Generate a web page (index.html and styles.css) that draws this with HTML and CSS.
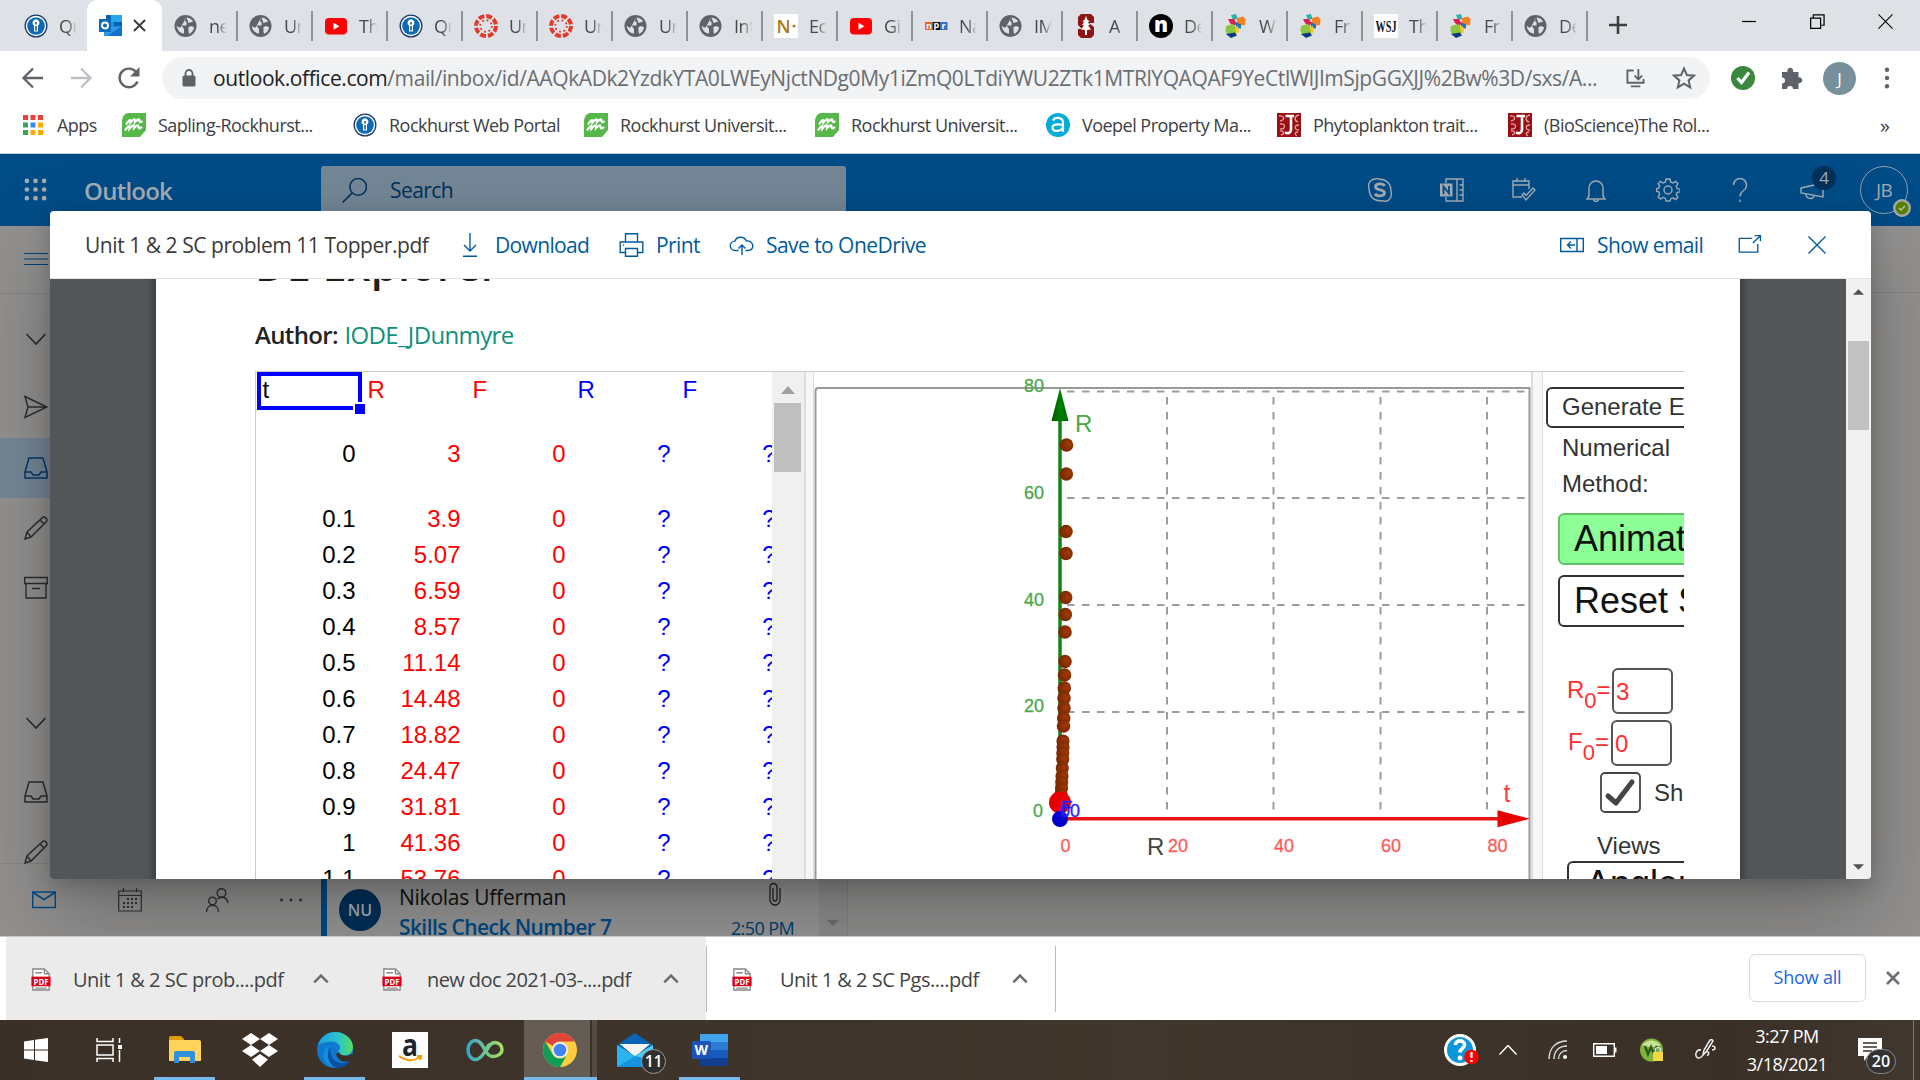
FILE: index.html
```html
<!DOCTYPE html>
<html lang="en">
<head>
<meta charset="utf-8">
<title>Outlook</title>
<link rel="stylesheet" href="styles.css">
</head>
<body>
<svg class="defs" aria-hidden="true">
  <symbol id="rock" viewBox="0 0 24 24"><circle cx="12" cy="12" r="11.500" fill="#1c3a6b"/><circle cx="12" cy="12" r="10.200" fill="#fff"/><circle cx="12" cy="12" r="8.800" fill="#0d6bb5"/><path d="M12 5.200a3.600 3.600 0 0 1 2 6.500V17.500h-4v-5.800a3.600 3.600 0 0 1 2-6.500z" fill="#fff"/><path d="M12 8v2.500M12 12v4.500" stroke="#1c3a6b" stroke-width="1.400"/></symbol>
  <symbol id="globe" viewBox="0 0 24 24"><circle cx="11.500" cy="12" r="11" fill="#5f6368"/><path d="M12.500 3.400 10 6.500 12.500 8v3.500H7.500l2.500 3.500v4.800c-4.300-.9-7-4-7.300-8L5 13.500h1.500M14.500 17.500v-4.500l3-1 2.600 1.500c-.6 3-2.300 5.200-5 6.500zM12.500 3.400c3 .3 5.400 1.800 6.600 4.100L14.500 9z" fill="#dee1e6"/></symbol>
  <symbol id="yt" viewBox="0 0 24 24"><rect x="1" y="4" width="22" height="16.500" rx="4" fill="#f00"/><path d="M9.500 8.800v7l6-3.500z" fill="#fff"/></symbol>
  <symbol id="canvas" viewBox="0 0 24 24"><circle cx="12" cy="12" r="10" fill="none" stroke="#e4392b" stroke-width="4" stroke-dasharray="5.850 2"/><circle cx="12" cy="12" r="5.800" fill="none" stroke="#e4392b" stroke-width="1.800" stroke-dasharray="1.800 2.750"/></symbol>
  <symbol id="ncol" viewBox="0 0 24 24"><rect width="24" height="24" fill="#fff"/><text x="2.500" y="18.500" font-family="Open Sans" font-size="18" fill="#a87b1d" font-weight="600">N</text><circle cx="20" cy="12" r="1.500" fill="#a87b1d"/></symbol>
  <symbol id="npr" viewBox="0 0 24 24"><rect x="1" y="8" width="7.500" height="8" fill="#e8602c"/><rect x="8.500" y="8" width="7.500" height="8" fill="#111"/><rect x="16" y="8" width="7.500" height="8" fill="#3a6fbf"/><g fill="#fff" font-family="Open Sans" font-weight="700" font-size="9"><text x="2" y="14.500">n</text><text x="9.500" y="14">p</text><text x="17.500" y="14.500">r</text></g></symbol>
  <symbol id="stan" viewBox="0 0 24 24"><path d="M7 0h10l3 3v6h-5l5 4v8l-3 3H7l-3-3v-6h4l-4-4V3z" fill="#8c1515"/><path d="m12 2 1.500 4 2 1-1.500 1.500 2 2.500-2 .5 3 4-4 .5v5h-2v-5l-4-.5 3-4-2-.5 2-2.500L8.500 7l2-1z" fill="#fff"/></symbol>
  <symbol id="nblk" viewBox="0 0 24 24"><circle cx="12" cy="12" r="12" fill="#000"/><text x="5" y="18" font-family="Open Sans" font-size="21" font-weight="800" fill="#fff">n</text></symbol>
  <symbol id="cubes" viewBox="0 0 24 24"><path d="m7 1 5-1 1.500 5L9 6z" fill="#29b1a5"/><path d="m13 4 6-1.500 2.500 2.500-.5 6-5 .5-3-3z" fill="#f58220"/><path d="m4 5 6 0 3 5-4 2-3-3z" fill="#d9224c"/><path d="m12 8 5 2.500v4L12 14z" fill="#1b75bb"/><path d="m2 12 7-2 3 3v6l-9 1.500-1.500-4z" fill="#8cc63f"/><path d="m2 20 9-1.500 2 3-6 2.500z" fill="#0b3a7a"/><path d="m11 13 3-1 1 6-3 2z" fill="#f9c623"/></symbol>
  <symbol id="wsj" viewBox="0 0 24 24"><rect width="24" height="24" fill="#fff"/><text x="1.500" y="17.500" textLength="21" lengthAdjust="spacingAndGlyphs" font-family="Liberation Serif" font-size="16" font-weight="700" fill="#111">WSJ</text></symbol>
  <symbol id="sapling" viewBox="0 0 24 24"><path d="M6 0h18v17l-6 7H0V7q1-6 6-7z" fill="#55b848"/><path d="M4 11.500Q9 4 8.500 9.500 13.500 3.500 13 9q5-5 4.500-.5Q18 10 20.500 8M3 17.500Q8 10 7.500 15.500 12.500 9.500 12 15q5-5 4.500-.5 .5 2 3.500-.5" fill="none" stroke="#fff" stroke-width="2.200"/></symbol>
  <symbol id="voepel" viewBox="0 0 24 24"><circle cx="12" cy="12" r="12" fill="#00acd8"/><path d="M7 7.500C8.500 3.500 17 4 17 9.500V19M17 12c-6-1.500-11-.5-10.500 3 .5 4.500 9 3.500 10.500-1" fill="none" stroke="#fff" stroke-width="2.200"/></symbol>
  <symbol id="jstor" viewBox="0 0 24 24"><rect width="24" height="24" fill="#990f14"/><path d="M2 3c6-1 6 4 1 5m0 3c6-1 6 5 0 5m0 2c4-1 5 3 1 4M22 2c-5 1-5 6-1 7m1 3c-5 0-5 5 0 5m-1 2c-3 0-4 2-1 4" stroke="#e2a0a0" stroke-width="1.300" fill="none"/><path d="M8.500 3H17M14 3v13c0 4-3 5-6 3.500" stroke="#fff" stroke-width="2.600" fill="none"/></symbol>
  <symbol id="pdf" viewBox="0 0 20 24"><path d="M1.500 1h12l5 5v17h-17z" fill="#fff" stroke="#888" stroke-width="1.400"/><path d="M13.500 1v5h5M4 5h7M4 21h12" fill="none" stroke="#888" stroke-width="1.400"/><rect x="0" y="9" width="20" height="10" fill="#d9001b"/><text x="2.200" y="17.300" textLength="15.600" lengthAdjust="spacingAndGlyphs" font-family="Open Sans" font-size="9" font-weight="700" fill="#fff">PDF</text></symbol>
  <symbol id="inbox" viewBox="0 0 24 24"><path d="m1 16 4-14h14l4 14v6H1zM1 16h6l2 3h6l2-3h6" fill="none" stroke="currentColor" stroke-width="1.500"/></symbol>
  <symbol id="pencil" viewBox="0 0 24 24"><path d="m1 23 2-7L18 2q2-2 4 0t0 4L7 21zM16 4l4 4M3 16l4 5" fill="none" stroke="currentColor" stroke-width="1.500"/></symbol>
  <symbol id="down" viewBox="0 0 24 24"><path d="m2.500 7 9.500 10 9.500-10" fill="none" stroke="currentColor" stroke-width="1.700"/></symbol>
  <symbol id="up" viewBox="0 0 16 16"><path d="m2 11 6-6 6 6" fill="none" stroke="#6b6e72" stroke-width="2.200"/></symbol>
</svg>

<div class="tabs">
  <div class="tab first"><svg><use href="#rock"/></svg><span>Qu</span></div>
  <div class="tab active"><svg viewBox="0 0 24 24"><path d="M7 1h16v14H7z" fill="#0a64ad"/><path d="M12 1h11v7H12z" fill="#28a8ea"/><path d="M7 8h8v7H7z" fill="#1490df"/><path d="M5 13l18-1v10H5z" fill="#2d9be6"/><path d="m8 22 15-10v10z" fill="#1272cc"/><rect y="5" width="12" height="13" fill="#0f6cbd"/><circle cx="6" cy="11.500" r="3" fill="none" stroke="#fff" stroke-width="1.900"/></svg><svg class="tclose" viewBox="0 0 14 14"><path d="m1 1 12 12M13 1 1 13" stroke="#3c4043" stroke-width="2.200"/></svg></div>
  <div class="tab"><svg><use href="#globe"/></svg><span>ne</span></div>
  <div class="tab"><svg><use href="#globe"/></svg><span>Un</span></div>
  <div class="tab"><svg><use href="#yt"/></svg><span>Th</span></div>
  <div class="tab"><svg><use href="#rock"/></svg><span>Qu</span></div>
  <div class="tab"><svg><use href="#canvas"/></svg><span>Un</span></div>
  <div class="tab"><svg><use href="#canvas"/></svg><span>Un</span></div>
  <div class="tab"><svg><use href="#globe"/></svg><span>Un</span></div>
  <div class="tab"><svg><use href="#globe"/></svg><span>Int</span></div>
  <div class="tab"><svg><use href="#ncol"/></svg><span>Ec</span></div>
  <div class="tab"><svg><use href="#yt"/></svg><span>Gi</span></div>
  <div class="tab"><svg><use href="#npr"/></svg><span>Na</span></div>
  <div class="tab"><svg><use href="#globe"/></svg><span>IM</span></div>
  <div class="tab"><svg><use href="#stan"/></svg><span>A</span></div>
  <div class="tab"><svg><use href="#nblk"/></svg><span>De</span></div>
  <div class="tab"><svg><use href="#cubes"/></svg><span>W</span></div>
  <div class="tab"><svg><use href="#cubes"/></svg><span>Fr</span></div>
  <div class="tab"><svg><use href="#wsj"/></svg><span>Th</span></div>
  <div class="tab"><svg><use href="#cubes"/></svg><span>Fr</span></div>
  <div class="tab"><svg><use href="#globe"/></svg><span>De</span></div>
  <svg class="newtab" viewBox="0 0 18 18"><path d="M9 0v18M0 9h18" stroke="#3c4043" stroke-width="2.600"/></svg>
  <div class="winctl">
    <svg viewBox="0 0 16 16"><path d="M0 8h15" stroke="#000" stroke-width="1.300"/></svg>
    <svg viewBox="0 0 16 16"><path d="M.7 4.500h10.600v10.800H.700zM3.500 4V1H15v11h-3.500" fill="none" stroke="#000" stroke-width="1.300"/></svg>
    <svg viewBox="0 0 16 16"><path d="m.5.500 15 15m0-15-15 15" stroke="#000" stroke-width="1.200"/></svg>
  </div>
</div>

<div class="toolbar">
  <svg class="nav" viewBox="0 0 24 24"><path d="M22 12H3M12 2.500 2.500 12l9.500 9.500" fill="none" stroke="#5f6368" stroke-width="2.300"/></svg>
  <svg class="nav" viewBox="0 0 24 24"><path d="M2 12h19M12 2.500l9.500 9.500-9.500 9.500" fill="none" stroke="#bdc1c6" stroke-width="2.300"/></svg>
  <svg class="nav" viewBox="0 0 24 24"><path d="M20.500 15.500a9.300 9.300 0 1 1-1-9" fill="none" stroke="#5f6368" stroke-width="2.400"/><path d="M22.500 1v9.500H13z" fill="#5f6368"/></svg>
  <div class="omni">
    <svg class="lock" viewBox="0 0 14 18"><rect x=".5" y="6.500" width="13" height="11" rx="1.500" fill="#5f6368"/><path d="M3.500 7V4.500a3.500 3.500 0 0 1 7 0V7" fill="none" stroke="#5f6368" stroke-width="1.800"/></svg>
    <span class="url"><b>outlook.office.com</b>/mail/inbox/id/AAQkADk2YzdkYTA0LWEyNjctNDg0My1iZmQ0LTdiYWU2ZTk1MTRlYQAQAF9YeCtlWlJImSjpGGXJJ%2Bw%3D/sxs/A...</span>
    <svg class="inst" viewBox="0 0 20 20"><path d="M8 1.500H1.500v13h17v-4M5 18.300h10M13 0v11M9 7l4 4 4-4" fill="none" stroke="#5f6368" stroke-width="2"/></svg>
    <svg class="star" viewBox="0 0 24 24"><path d="m12 2.500 2.900 6.600 7.100.6-5.400 4.700 1.600 7-6.200-3.700-6.200 3.700 1.600-7L2 9.700l7.100-.6z" fill="none" stroke="#5f6368" stroke-width="2"/></svg>
  </div>
  <svg class="shield" viewBox="0 0 24 24"><circle cx="12" cy="12" r="12" fill="#3a873d"/><path d="m6.500 12 4 4.500L18 6.500" fill="none" stroke="#fff" stroke-width="3.200"/></svg>
  <svg class="puzzle" viewBox="0 0 22 22"><path d="M1 5h5.500a3 3 0 1 1 5.500 0h5.500v5.500a2.900 2.900 0 1 1 0 5.500v6h-5.500a3 3 0 0 0-6 0H1v-5.500a3 3 0 0 0 0-6z" fill="#5f6368"/></svg>
  <div class="me">J</div>
  <svg class="kebab" viewBox="0 0 6 24"><g fill="#5f6368"><circle cx="3" cy="3" r="2.400"/><circle cx="3" cy="12" r="2.400"/><circle cx="3" cy="21" r="2.400"/></g></svg>
</div>

<div class="marks">
  <div class="apps"><svg viewBox="0 0 20 20"><path d="M0 0h5v5H0zM7.500 0h5v5h-5zM15 0h5v5h-5z" fill="#ea4335"/><path d="M0 7.500h5v5H0z" fill="#34a853"/><path d="M7.500 7.500h5v5h-5z" fill="#4285f4"/><path d="M15 7.500h5v5h-5zM7.500 15h5v5h-5zM15 15h5v5h-5z" fill="#f9ab00"/><path d="M0 15h5v5H0z" fill="#34a853"/></svg><span>Apps</span></div>
  <div class="mark"><svg><use href="#sapling"/></svg><span>Sapling-Rockhurst...</span></div>
  <div class="mark"><svg><use href="#rock"/></svg><span>Rockhurst Web Portal</span></div>
  <div class="mark"><svg><use href="#sapling"/></svg><span>Rockhurst Universit...</span></div>
  <div class="mark"><svg><use href="#sapling"/></svg><span>Rockhurst Universit...</span></div>
  <div class="mark"><svg><use href="#voepel"/></svg><span>Voepel Property Ma...</span></div>
  <div class="mark"><svg><use href="#jstor"/></svg><span>Phytoplankton trait...</span></div>
  <div class="mark"><svg><use href="#jstor"/></svg><span>(BioScience)The Rol...</span></div>
  <span class="more">»</span>
</div>

<div class="app">
  <header class="suite">
    <svg class="waffle" viewBox="0 0 24 24"><g fill="#a3abb3"><circle cx="3" cy="3" r="2.400"/><circle cx="12" cy="3" r="2.400"/><circle cx="21" cy="3" r="2.400"/><circle cx="3" cy="12" r="2.400"/><circle cx="12" cy="12" r="2.400"/><circle cx="21" cy="12" r="2.400"/><circle cx="3" cy="21" r="2.400"/><circle cx="12" cy="21" r="2.400"/><circle cx="21" cy="21" r="2.400"/></g></svg>
    <span class="brand">Outlook</span>
    <div class="search"><svg viewBox="0 0 24 24"><circle cx="15.500" cy="8.500" r="8" fill="none" stroke="#00305a" stroke-width="1.500"/><path d="M9.500 14.500.500 23.500" stroke="#00305a" stroke-width="1.500"/></svg><span>Search</span></div>
    <div class="tools">
      <svg viewBox="0 0 24 24"><path d="M7 1c3-1 4 .2 5 .2 6 0 11 4.800 10.800 10.800C22.800 13 24 15 23 18.500 22 22 19 24 16 23c-1-.4-2-.2-4-.2C6 22.800 1.200 18 1.200 12 1.200 11 0 9 1 5.500 2 3 4 1.500 7 1z"/><path d="M16.500 8c-1-3-9-3-9 .8 0 4 9 2.200 9 6 0 4-8 4-9.300.8" stroke-width="2.800"/></svg>
      <svg viewBox="0 0 24 24"><path d="M6 5V1h17v22H6v-4M17 1v22M19.500 7H23M19.500 12H23M19.500 17H23"/><path d="M0 5.500h12.500v13H0z" fill="#a3abb3" stroke="none"/><path d="M3.500 16V8.500l5.500 7V8" stroke="#004c87" stroke-width="1.800"/></svg>
      <svg viewBox="0 0 24 24"><path d="M10 19H1V3h16v8M1 7h16M5 0v4M13 0v4M10 17l4 5 9-10-2-2-7 7.500-2-2.500z"/></svg>
      <svg viewBox="0 0 24 24"><path d="M3 21h18l-2-3v-8a7 7 0 0 0-14 0v8zM9.500 21a2.500 2.500 0 0 0 5 0"/></svg>
      <svg viewBox="0 0 24 24"><circle cx="12" cy="12" r="4"/><path d="M10 1h4l.6 3 2.400 1 2.600-1.700 2.300 2.400L20.300 8.500l.9 2.200 3 .5v2.600l-3 .6-.9 2.300 1.600 2.600-2.300 2.300-2.600-1.700-2.400 1L14 23h-4l-.6-2.600-2.400-1-2.600 1.700-2.300-2.300 1.600-2.600-.9-2.300-2.300-.6v-2.600l2.300-.5.9-2.200L2.100 5.700l2.300-2.400L7 5l2.400-1z"/></svg>
      <svg viewBox="0 0 24 24"><path d="M5.500 7a6.500 6.500 0 1 1 10 5.500c-2.500 1.700-3.500 3-3.500 6M12 21.500V24"/></svg>
      <div class="mega"><svg viewBox="0 0 24 24"><path d="m1 10 22-5v14L1 15zM6 16c0 5 7 6 8 2"/></svg><i>4</i></div>
    </div>
    <div class="who">JB<svg viewBox="0 0 18 18"><circle cx="9" cy="9" r="9" fill="#a8a8a8"/><circle cx="9" cy="9" r="6.500" fill="#568200"/><path d="m6 9 2 2 4-4" fill="none" stroke="#b9c4a8" stroke-width="1.500"/></svg></div>
  </header>

  <div class="owa">
    <nav class="rail">
      <div class="burger"><svg viewBox="0 0 24 24"><path d="M0 6.500h24M0 12h24M0 17.500h24" stroke="#004377" stroke-width="1.200"/></svg></div>
      <div class="ri gap1"><svg><use href="#down"/></svg></div>
      <div class="ri gap2"><svg viewBox="0 0 24 24"><path d="m1 1.500 22 10.500L1 22.500 4 12zM4 12h19" fill="none" stroke="currentColor" stroke-width="1.500"/></svg></div>
      <div class="ri on"><svg><use href="#inbox"/></svg></div>
      <div class="ri"><svg><use href="#pencil"/></svg></div>
      <div class="ri"><svg viewBox="0 0 24 24"><path d="M.7 1.500h22.600v6H.700zM2 7.500h20V22H2zM8 12.500h8" fill="none" stroke="currentColor" stroke-width="1.400"/></svg></div>
      <div class="ri gap3"><svg><use href="#down"/></svg></div>
      <div class="ri gap4"><svg><use href="#inbox"/></svg></div>
      <div class="ri last"><svg><use href="#pencil"/></svg></div>
      <div class="modules">
        <svg viewBox="0 0 24 24"><path d="M.7 4h22.600v15.500H.700zM1 4.500l11 7 11-7" fill="none" stroke="#004d8a" stroke-width="1.500"/></svg>
        <svg viewBox="0 0 24 24"><path d="M.7 3h22.600v20H.700zM.700 7.500h22.600M5.500 0v4M18.500 0v4" fill="none" stroke="#333" stroke-width="1.200"/><path d="M9 11h11M5 15h15M5 19h11" stroke="#333" stroke-width="2" stroke-dasharray="2 2"/></svg>
        <svg class="people" viewBox="0 0 24 24"><g fill="none" stroke="#333" stroke-width="1.400"><circle cx="16.500" cy="5" r="4.300"/><circle cx="7.500" cy="13" r="3.800"/><path d="M12 11q9-5 11 4M1.500 24c0-9 12-9 12 0"/></g></svg>
        <svg class="dots" viewBox="0 0 24 24"><g fill="#333"><circle cx="2.500" cy="12" r="1.500"/><circle cx="12" cy="12" r="1.500"/><circle cx="21.500" cy="12" r="1.500"/></g></svg>
      </div>
    </nav>
    <section class="list">
      <div class="msg">
        <div class="av">NU</div>
        <div class="lines">
          <div class="line"><span class="from">Nikolas Ufferman</span><svg viewBox="0 0 12 24"><path d="M4 6v11a2 2 0 0 0 4 0V5a3.500 3.500 0 0 0-7 0v13a5 5 0 0 0 10 0V6" fill="none" stroke="#222" stroke-width="1.300"/></svg></div>
          <div class="line"><span class="subj">Skills Check Number 7</span><span class="time">2:50 PM</span></div>
        </div>
      </div>
      <div class="lscroll"><i></i></div>
    </section>
    <section class="reading"></section>
  </div>

  <div class="modal">
    <div class="mhead">
      <span class="fname">Unit 1 &amp; 2 SC problem 11 Topper.pdf</span>
      <svg class="i-dl" viewBox="0 0 14 24"><path d="M7 0v18M1 12l6 6 6-6M0 23.200h14" fill="none" stroke="#005a9e" stroke-width="1.400"/></svg><span class="t-dl">Download</span>
      <svg class="i-pr" viewBox="0 0 24 24"><path d="M6 9V.700h12V9M6 19.500H.700V9h22.600v10.500H18M6 15.500h12v7.800H6zM3.500 12h1" fill="none" stroke="#005a9e" stroke-width="1.400"/></svg><span class="t-pr">Print</span>
      <svg class="i-sv" viewBox="0 0 24 24"><path d="M9 17.500H5.500a4.700 4.700 0 0 1 0-9.400C7 3 14.500 3 17 8c3-.5 6.300 1.500 6.300 4.800S21 17.500 18.500 17.500H16M12.500 22V12m-3.500 3.500 3.500-3.500 3.500 3.500" fill="none" stroke="#005a9e" stroke-width="1.400"/></svg><span class="t-sv">Save to OneDrive</span>
      <div class="mright">
        <svg class="i-em" viewBox="0 0 24 16"><path d="M.7 1.500h22.600v13H.700zM17 1.500v13M7.500 8H15M11 4.500 7.500 8l3.500 3.500" fill="none" stroke="#005a9e" stroke-width="1.400"/></svg><span class="t-em">Show email</span>
        <svg class="i-po" viewBox="0 0 24 20"><path d="M14 3.500H.700V18h19.500V9.500M15 8.500 23 .700M17 .700h6v6" fill="none" stroke="#005a9e" stroke-width="1.400"/></svg>
        <svg class="i-x" viewBox="0 0 18 18"><path d="m.500.500 17 17m0-17-17 17" stroke="#005a9e" stroke-width="1.400"/></svg>
      </div>
    </div>
    <div class="viewer">
      <div class="gutter left"></div>
      <div class="paper">
        <h1>DE Explorer</h1>
        <p class="author"><b>Author:</b> <a>IODE_JDunmyre</a></p>
        <div class="applet">
          <div class="sheet">
            <div class="row head"><span class="k sel">t<i></i></span><span class="r">R</span><span class="r">F</span><span class="b">R</span><span class="b">F</span></div>
            <div class="row tall"><span>0</span><span class="r">3</span><span class="r">0</span><span class="b">?</span><span class="b">?</span></div>
            <div class="row"><span>0.1</span><span class="r">3.9</span><span class="r">0</span><span class="b">?</span><span class="b">?</span></div>
            <div class="row"><span>0.2</span><span class="r">5.07</span><span class="r">0</span><span class="b">?</span><span class="b">?</span></div>
            <div class="row"><span>0.3</span><span class="r">6.59</span><span class="r">0</span><span class="b">?</span><span class="b">?</span></div>
            <div class="row"><span>0.4</span><span class="r">8.57</span><span class="r">0</span><span class="b">?</span><span class="b">?</span></div>
            <div class="row"><span>0.5</span><span class="r">11.14</span><span class="r">0</span><span class="b">?</span><span class="b">?</span></div>
            <div class="row"><span>0.6</span><span class="r">14.48</span><span class="r">0</span><span class="b">?</span><span class="b">?</span></div>
            <div class="row"><span>0.7</span><span class="r">18.82</span><span class="r">0</span><span class="b">?</span><span class="b">?</span></div>
            <div class="row"><span>0.8</span><span class="r">24.47</span><span class="r">0</span><span class="b">?</span><span class="b">?</span></div>
            <div class="row"><span>0.9</span><span class="r">31.81</span><span class="r">0</span><span class="b">?</span><span class="b">?</span></div>
            <div class="row"><span>1</span><span class="r">41.36</span><span class="r">0</span><span class="b">?</span><span class="b">?</span></div>
            <div class="row"><span>1.1</span><span class="r">53.76</span><span class="r">0</span><span class="b">?</span><span class="b">?</span></div>
          </div>
          <div class="sscroll"><svg viewBox="0 0 14 8"><path d="M0 8 7 0l7 8z" fill="#a0a0a0"/></svg><i></i></div>
          <div class="split"></div>
          <svg class="graph" viewBox="814 372 717 507">
            <defs>
              <radialGradient id="gb" cx=".65" cy=".45"><stop offset="0" stop-color="#a33a04"/><stop offset="1" stop-color="#7c2a00"/></radialGradient>
              <linearGradient id="ga"><stop offset="0" stop-color="#005500"/><stop offset=".5" stop-color="#008000"/><stop offset="1" stop-color="#006a00"/></linearGradient>
            </defs>
            <path d="M815.500 880V391q0-3 3-3h711v492" fill="none" stroke="#999" stroke-width="2"/>
            <g stroke="#9c9c9c" stroke-width="2" stroke-dasharray="7.500 7.500" fill="none">
              <path d="M1067 391.500h459M1067 498h459M1067 605h459M1067 712h459"/>
              <path d="M1167 397v416M1273.500 397v416M1380.500 397v416M1487 397v416"/>
            </g>
            <path d="M1060 410v400" stroke="#158315" stroke-width="3.500"/>
            <path d="m1060 388 8.500 33h-17z" fill="url(#ga)"/>
            <g fill="url(#gb)">
              <circle cx="1066.500" cy="445" r="6.800"/><circle cx="1066.300" cy="474" r="6.800"/><circle cx="1066" cy="531.500" r="6.800"/><circle cx="1066" cy="553.500" r="6.800"/><circle cx="1065.600" cy="597.500" r="6.800"/><circle cx="1065.300" cy="614.500" r="6.800"/><circle cx="1065" cy="632" r="6.800"/><circle cx="1065" cy="661.500" r="6.800"/><circle cx="1064.500" cy="675" r="6.800"/><circle cx="1064.300" cy="688" r="6.800"/><circle cx="1064" cy="698" r="6.800"/><circle cx="1064" cy="708" r="6.800"/><circle cx="1063.700" cy="718" r="6.800"/><circle cx="1063.500" cy="726" r="6.800"/>
              <circle cx="1063" cy="741" r="6.600"/><circle cx="1063" cy="747" r="6.600"/><circle cx="1062.800" cy="753" r="6.600"/><circle cx="1062.700" cy="759" r="6.600"/><circle cx="1062.300" cy="768" r="6.600"/><circle cx="1062" cy="776" r="6.600"/><circle cx="1061.700" cy="782" r="6.600"/><circle cx="1061.500" cy="788" r="6.600"/><circle cx="1061" cy="794" r="6.600"/>
            </g>
            <path d="M1066 818.700h432" stroke="#e81414" stroke-width="3.500"/>
            <path d="m1530 818.700-32.500 8.500v-17z" fill="#e60000"/>
            <circle cx="1060" cy="802.500" r="11" fill="#e60000"/>
            <circle cx="1060" cy="819" r="8" fill="#0000cc"/>
            <g font-family="Liberation Sans, Arial, sans-serif" font-size="18">
              <g fill="#4aa84a" stroke="#4aa84a" stroke-width=".3"><text x="1024" y="391.500">80</text><text x="1024" y="498.500">60</text><text x="1024" y="605.500">40</text><text x="1024" y="712">20</text><text x="1033" y="817">0</text></g>
              <g fill="#ff5a5a" stroke="#ff5a5a" stroke-width=".3"><text x="1060.500" y="852">0</text><text x="1168" y="852">20</text><text x="1274" y="852">40</text><text x="1381" y="852">60</text><text x="1487.500" y="852">80</text></g>
              <text x="1075" y="432" font-size="24" fill="#4aa84a">R</text>
              <text x="1147" y="855" font-size="24" fill="#444">R</text>
              <text x="1503.500" y="802" font-size="25" fill="#ff4040">t</text>
              <g fill="#2222ff" stroke="#2222ff" stroke-width=".3"><text x="1060" y="817">0</text><text x="1070" y="817">0</text><text x="1061" y="814" font-size="19">F</text></g>
            </g>
          </svg>
          <div class="split two"></div>
          <div class="panel">
            <div class="btn gen">Generate E</div>
            <div class="lbl">Numerical<br>Method:</div>
            <div class="btn big anim">Animate</div>
            <div class="btn big reset">Reset S</div>
            <div class="init r0"><span>R<sub>0</sub>=</span><b>3</b></div>
            <div class="init f0"><span>F<sub>0</sub>=</span><b>0</b></div>
            <div class="chk"><svg viewBox="0 0 41 41"><rect x="1" y="1" width="39" height="39" rx="4" fill="#fff" stroke="#444" stroke-width="1.800"/><path d="m8 24 8 7L32 10" fill="none" stroke="#444" stroke-width="5" stroke-linecap="round" stroke-linejoin="round"/></svg><span>Show</span></div>
            <div class="views">Views</div>
            <div class="btn big ang">Angler</div>
          </div>
        </div>
      </div>
      <div class="gutter right"></div>
      <div class="vscroll"><svg viewBox="0 0 12 6"><path d="m0 6 6-6 6 6z" fill="#505050"/></svg><i></i><svg class="dn" viewBox="0 0 12 6"><path d="m0 0 6 6 6-6z" fill="#505050"/></svg></div>
    </div>
  </div>
</div>

<div class="shelf">
  <div class="dl one"><svg class="pdf"><use href="#pdf"/></svg><span>Unit 1 &amp; 2 SC prob....pdf</span><svg class="chev"><use href="#up"/></svg></div>
  <div class="dl two"><svg class="pdf"><use href="#pdf"/></svg><span>new doc 2021-03-....pdf</span><svg class="chev"><use href="#up"/></svg></div>
  <div class="dl three"><svg class="pdf"><use href="#pdf"/></svg><span>Unit 1 &amp; 2 SC Pgs....pdf</span><svg class="chev"><use href="#up"/></svg></div>
  <div class="showall">Show all</div>
  <svg class="sx" viewBox="0 0 14 14"><path d="m1 1 12 12M13 1 1 13" stroke="#6b6e72" stroke-width="2.600"/></svg>
</div>

<div class="task">
  <div class="tb start"><svg width="24" height="24" viewBox="0 0 24 24"><path d="M0 3.500 10 2v9.500H0zM11 1.800 24 0v11.500H11zM0 12.500h10V22L0 20.500zM11 12.500h13V24l-13-1.800z" fill="#fff"/></svg></div>
  <div class="tb tv"><svg width="26" height="24" viewBox="0 0 26 24"><path d="M1 7v10h16V7zM1 0v3.500h16V0M1 24v-3.500h16V24M23.500 0v5M23.500 12v12" fill="none" stroke="#fff" stroke-width="1.500"/><path d="M22 7h4v4h-4z" fill="#fff"/></svg></div>
  <div class="tb run"><svg width="32" height="28" viewBox="0 0 32 28"><path d="M0 2q0-2 2-2h10l3 3v6H0z" fill="#e09b00"/><path d="M0 4h30q2 0 2 2v19H0z" fill="#ffd359"/><path d="M5 27V17q0-2 2-2h17q2 0 2 2v10h-5v-6H10v6z" fill="#2f8fdc"/></svg></div>
  <div class="tb"><svg width="36" height="36" viewBox="0 0 36 36"><path d="m9 1 9 6-9 6-9-6zM27 1l9 6-9 6-9-6zM9 13l9 6-9 6-9-6zM27 13l9 6-9 6-9-6zM18 22l8 5.500L18 35l-8-7.500z" fill="#fff"/></svg></div>
  <div class="tb run"><svg width="36" height="36" viewBox="0 0 36 36"><defs><linearGradient id="e1"><stop offset="0" stop-color="#1a9fe0"/><stop offset=".6" stop-color="#2bc4c9"/><stop offset="1" stop-color="#5be05a"/></linearGradient></defs><circle cx="18" cy="18" r="18" fill="#0f78cf"/><path d="M1 13C4 4 11 0 18 0c10 0 18 7 18 15 0 5-4 8.500-9 8.500-4 0-6-1.500-6-3 0-2 2-2 2-5 0-3-4-6-9-6-6 0-11 3-13 3.500z" fill="url(#e1)"/><path d="M12 14c-3 8 1 18 11 21-5 1.500-14-1-16-9-1.500-6 1-10 5-12z" fill="#1390dd"/><path d="M14 15c-3 8 4 17 12 16 3 0 5-1 7-2-3 5-8 7-12 7-8-1-14-13-7-21z" fill="#0b4fa0"/><path d="M22 20c1 4 8 5 13 2l1 1-2.500 5.500C28 32 20 28 19 22z" fill="#3b3027"/></svg></div>
  <div class="tb"><svg width="36" height="36" viewBox="0 0 36 36"><rect width="36" height="36" fill="#fff"/><text x="10" y="23.500" font-family="Open Sans" font-size="31" font-weight="700" fill="#1b2530" textLength="16" lengthAdjust="spacingAndGlyphs">a</text><path d="M7 24q11 8 21 1M25 24h4l-1 4" fill="none" stroke="#f90" stroke-width="2"/></svg></div>
  <div class="tb"><svg width="38" height="24" viewBox="0 0 38 24"><defs><linearGradient id="inf"><stop offset="0" stop-color="#35a6c8"/><stop offset="1" stop-color="#a5e05f"/></linearGradient></defs><path d="M26 7.500C22 4 20 12 18 15c-2 3-4.500 6.500-8.500 6.500C5 21.500 2 17 2 12s3-9.500 7.500-9.500c5 0 7 5 9.500 9.500 2 4 4 6.500 8 6.500 5 0 9-3 9-7s-3-7-7-7c-5 0-7 5-9 9" fill="none" stroke="url(#inf)" stroke-width="3.400"/></svg></div>
  <div class="tb run chrome"><svg width="34" height="34" viewBox="0 0 34 34"><circle cx="17" cy="17" r="17" fill="#ffcd40"/><path d="M2.300 8.500A17 17 0 0 1 31.700 8.500H17a8.500 8.500 0 0 0-7.400 4.300z" fill="#db4437"/><path d="M2.300 8.500A17 17 0 0 0 17 34l7.400-12.800A8.500 8.500 0 0 1 9.600 21.200z" fill="#0f9d58"/><circle cx="17" cy="17" r="8" fill="#f1f1f1"/><circle cx="17" cy="17" r="6.300" fill="#4285f4"/></svg></div>
  <div class="tb mailapp"><svg width="36" height="34" viewBox="0 0 36 34"><path d="M0 12 18 0l18 12v5H0z" fill="#0a63b5"/><path d="M3 11h30L18 24z" fill="#f3f3f3"/><path d="M0 12v22h36V12L18 23z" fill="#2ab4f0"/><path d="m0 34 25-15 11-7v22z" fill="#1792df"/><path d="m18 23 18-11v15z" fill="#45d0f5"/></svg><i>11</i></div>
  <div class="tb run word"><svg width="36" height="32" viewBox="0 0 36 32"><path d="M8 0h28v8H8z" fill="#41a5ee"/><path d="M8 8h28v8H8z" fill="#2b7cd3"/><path d="M8 16h28v8H8z" fill="#185abd"/><path d="M8 24h28v8H8z" fill="#103f91"/><rect y="7" width="19" height="18" rx="1.500" fill="#1a54b8"/><text x="2.500" y="21" font-family="Open Sans" font-size="14" font-weight="700" fill="#fff">W</text></svg></div>
  <div class="tray">
    <svg class="q" width="36" height="34" viewBox="0 0 36 34"><circle cx="16" cy="17" r="14.500" fill="#0d96d8" stroke="#fff" stroke-width="3"/><path d="M11.500 12c0-5.500 9-5.500 9 0 0 3.500-4.500 3.500-4.500 7.500" fill="none" stroke="#fff" stroke-width="3.600"/><circle cx="16" cy="25" r="2.400" fill="#fff"/><circle cx="27.500" cy="24" r="7.300" fill="#f00"/><path d="M27.500 19v6M27.500 27v2" stroke="#fff" stroke-width="2.200"/></svg>
    <svg class="tc" width="18" height="10" viewBox="0 0 18 10"><path d="m.5 9.500 8.500-9 8.500 9" fill="none" stroke="#fff" stroke-width="1.500"/></svg>
    <svg class="wf" width="20" height="20" viewBox="0 0 20 20"><g fill="none" stroke="#ddd" stroke-width="1.400"><path d="M1 19C1 8 8 1 19 1M6 19C6 11 11 6 19 6M10.500 19c0-5 3.500-8.500 8.500-8.500"/></g><circle cx="17" cy="17" r="2" fill="#fff"/></svg>
    <svg class="bt" width="24" height="14" viewBox="0 0 24 14"><path d="M.7.700h20.600v12.600H.700z" fill="none" stroke="#fff" stroke-width="1.400"/><path d="M3 3h11v8H3zM22 4.500h1.500v5H22z" fill="#fff"/></svg>
    <svg class="wr" width="24" height="24" viewBox="0 0 24 24"><circle cx="11.500" cy="12" r="11.500" fill="#7fb43c"/><path d="M2 7q9-9 19 0-9 4-19 0z" fill="#c6e29a"/><path d="m5 8 3 8 3-7 3 7 3-8" fill="none" stroke="#2d5a1a" stroke-width="2.400"/><path d="M13 14h10v9H13z" fill="#f0d940"/><path d="M15.500 14v-3q2.500-3 5 0v3" fill="none" stroke="#ddd" stroke-width="1.600"/></svg>
    <svg class="pn" width="22" height="22" viewBox="0 0 22 22"><path d="M6 11c-5-1-7 6-3 8 4 1 5-4 8-6 4-1 3 4 1 3M8 16 9 11l6-10q2-1 3 1l-7 11zM17 7c4 0 4 4 0 4" fill="none" stroke="#eee" stroke-width="1.500"/></svg>
    <div class="clock"><span>3:27 PM</span><span>3/18/2021</span></div>
    <div class="note"><svg width="24" height="24" viewBox="0 0 24 24"><path d="M0 0h24v18H10l-4 5v-5H0z" fill="#fff"/><path d="M5 5h14M5 9h14M5 13h9" stroke="#3a3129" stroke-width="1.300"/></svg><i>20</i></div>
    <div class="peek"></div>
  </div>
</div>
</body>
</html>
```
FILE: styles.css
```css
* { box-sizing: border-box; }
body { margin: 0; width: 1920px; height: 1080px; overflow: hidden; background: #fff; font-family: "Open Sans", "Noto Sans", sans-serif; font-size: 18px; color: #3c4043; display: flex; flex-direction: column; }
svg { display: block; flex: none; }
span { white-space: nowrap; }
i { font-style: normal; }
.defs { width: 0; height: 0; position: absolute; }

/* tab strip */
.tabs { height: 51px; flex: none; background: #dee1e6; display: flex; padding-left: 12px; }
.tab { width: 75px; flex: none; display: flex; align-items: center; padding-left: 12px; position: relative; }
.tab svg { width: 24px; height: 24px; }
.tab span { width: 18px; margin-left: 11px; overflow: hidden; font-size: 18px; letter-spacing: -.5px; color: #45494d; -webkit-mask-image: linear-gradient(90deg, #000 45%, transparent); mask-image: linear-gradient(90deg, #000 45%, transparent); }
.tab::after { content: ""; position: absolute; right: -1px; top: 11px; width: 2px; height: 30px; background: #8f9296; }
.tab.first::after, .tab.active::after { display: none; }
.tab.active { background: #fff; border-radius: 10px 10px 0 0; }
.tab.active .tclose { width: 13px; height: 13px; margin-left: 10px; }
.newtab { width: 18px; height: 18px; margin: 16px 0 0 22px; }
.winctl { margin-left: auto; display: flex; gap: 53px; padding: 14px 27px 0 0; }
.winctl svg { width: 15px; height: 15px; }

/* toolbar */
.toolbar { height: 54px; flex: none; display: flex; align-items: center; padding-left: 21px; }
.nav { width: 24px; height: 24px; margin-right: 24px; }
.omni { width: 1548px; height: 42px; margin-left: -3px; border-radius: 21px; background: #f1f3f4; display: flex; align-items: center; padding-left: 20px; }
.lock { width: 14px; height: 18px; }
.url { width: 1413px; margin-left: 17px; font-size: 21px; letter-spacing: -.41px; color: #6a6e73; }
.url b { font-weight: 400; color: #202124; }
.inst { width: 19px; height: 19px; margin-right: 27px; }
.star { width: 24px; height: 24px; }
.shield { width: 24px; height: 24px; margin-left: 21px; }
.puzzle { width: 22px; height: 22px; margin-left: 26px; }
.me { width: 33px; height: 33px; margin-left: 20px; border-radius: 50%; background: #78909c; color: #fff; font-size: 17px; display: flex; align-items: center; justify-content: center; }
.kebab { width: 6px; height: 22px; margin-left: 28px; }

/* bookmarks */
.marks { height: 49px; flex: none; display: flex; align-items: center; padding: 0 0 8px 23px; border-bottom: 1px solid #c9ccd0; font-size: 18px; letter-spacing: -.52px; }
.apps { width: 99px; display: flex; align-items: center; gap: 14px; }
.apps svg { width: 20px; height: 20px; }
.mark { width: 231px; flex: none; display: flex; align-items: center; gap: 12px; }
.mark svg { width: 24px; height: 24px; }
.more { margin-left: 141px; font-size: 20px; }

/* Outlook */
.app { position: relative; height: 782px; flex: none; overflow: hidden; display: flex; flex-direction: column; }
.suite { height: 72px; flex: none; background: #004c87; display: flex; padding-left: 24px; }
.waffle { width: 23px; height: 23px; margin-top: 24px; }
.brand { width: 237px; margin: 19px 0 0 37px; font-size: 24px; line-height: 36px; font-weight: 600; letter-spacing: -.75px; color: #a3abb3; }
.search { width: 525px; height: 48px; margin-top: 12px; border-radius: 3px; background: #748797; display: flex; align-items: center; padding-left: 21px; font-size: 21px; color: #00305a; }
.search svg { width: 25px; height: 25px; margin-right: 23px; }
.search span { letter-spacing: -.55px; }
.tools { display: flex; gap: 48px; margin: 24px 0 0 522px; height: 24px; }
.tools svg { width: 24px; height: 24px; fill: none; stroke: #a3abb3; stroke-width: 1.4; }
.mega { position: relative; }
.mega i { position: absolute; left: 12px; top: -12px; width: 24px; height: 24px; border-radius: 50%; background: #00305a; color: #a3abb3; font-size: 17px; line-height: 24px; text-align: center; }
.who { position: relative; width: 48px; height: 48px; margin: 12px 0 0 36px; border: 1.5px solid #8fa0b0; border-radius: 50%; color: #a3abb3; font-size: 19px; letter-spacing: -.6px; display: flex; align-items: center; justify-content: center; }
.who svg { position: absolute; left: 32px; top: 32px; width: 18px; height: 18px; }

.owa { flex: 1; display: flex; background: #929190; }
.rail { width: 321px; height: 710px; display: flex; flex-direction: column; color: #2d2d2d; background: #929190; }
.burger { height: 68px; flex: none; padding: 21px 0 0 24px; border-bottom: 1px solid #858483; }
.burger svg, .ri svg { width: 24px; height: 24px; }
.ri { height: 60px; flex: none; display: flex; align-items: center; padding-left: 24px; }
.gap1 { margin-top: 15px; }
.gap2 { margin-top: 8px; }
.ri.on { margin-top: 1px; background: #768797; color: #003a6b; }
.gap3 { margin-top: 75px; }
.gap4 { margin-top: 9px; }
.ri.last { height: 42px; padding-top: 18px; border-bottom: 1px solid #858483; }
.modules { flex: 1; display: flex; padding: 24px 0 0 32px; gap: 62px; }
.modules svg { width: 24px; height: 24px; }
.modules .people { margin-left: 1px; }
.modules .dots { margin-left: -12px; }
.list { width: 527px; display: flex; align-items: flex-end; border-right: 1px solid #858483; }
.msg { width: 498px; height: 57px; border-left: 6px solid #004a84; display: flex; background: #979797; }
.av { width: 42px; height: 42px; margin: 10px 0 0 12px; border-radius: 50%; background: #00305a; color: #a9adb2; font-size: 16px; font-weight: 600; display: flex; align-items: center; justify-content: center; }
.lines { width: 396px; margin-left: 18px; overflow: hidden; }
.line { display: flex; justify-content: space-between; height: 30px; line-height: 30px; font-size: 21px; padding-right: 1px; }
.line:first-child { margin-top: 3px; }
.from { letter-spacing: -.25px; color: #111; }
.line svg { width: 12px; height: 24px; margin: 0 13px 0 0; }
.subj { font-weight: 600; letter-spacing: -.6px; color: #004a84; }
.time { font-size: 18px; letter-spacing: -.6px; color: #00406f; line-height: 32px; }
.lscroll { width: 28px; height: 57px; padding: 41px 0 0 8px; background: #8e8e8e; }
.lscroll i { display: block; width: 12px; border: 6px solid transparent; border-top-color: #6d6f71; border-bottom: 0; }
.reading { flex: 1; height: 67px; border-bottom: 1px solid #858483; }

/* attachment preview */
.modal { position: absolute; left: 50px; top: 57px; width: 1821px; height: 668px; border-radius: 4px; overflow: hidden; background: #fff; box-shadow: 0 38px 86px rgba(0,0,0,.25), 0 7px 22px rgba(0,0,0,.2); }
.mhead { height: 68px; border-bottom: 1px solid #e3e3e3; display: flex; align-items: center; padding-left: 35px; font-size: 21px; color: #005a9e; }
.fname { width: 378px; color: #3b3a39; letter-spacing: -.45px; }
.i-dl { width: 14px; height: 24px; }
.t-dl { width: 105px; margin-left: 18px; letter-spacing: -.65px; }
.i-pr { width: 25px; height: 24px; margin-left: 19px; }
.t-pr { width: 60px; margin-left: 12px; letter-spacing: -.6px; }
.i-sv { width: 25px; height: 24px; margin-left: 13px; }
.t-sv { margin-left: 12px; letter-spacing: -.55px; }
.mright { margin-left: auto; display: flex; align-items: center; padding-right: 45px; }
.i-em { width: 24px; height: 16px; }
.t-em { width: 141px; margin-left: 13px; letter-spacing: -.6px; }
.i-po { width: 24px; height: 19px; }
.i-x { width: 18px; height: 18px; margin-left: 46px; }
.viewer { height: 600px; display: flex; background: #525659; }
.gutter { flex: none; }
.gutter.left { width: 106px; background: linear-gradient(270deg, #3c4043, #525659 9px); }
.gutter.right { width: 106px; background: linear-gradient(90deg, #3c4043, #525659 9px); }
.paper { width: 1584px; height: 600px; background: #fff; padding-left: 99px; overflow: hidden; display: flex; flex-direction: column; }
h1 { margin: -44px 0 0; height: 60px; flex: none; font-size: 43px; line-height: 60px; font-weight: 600; color: #1f1f1f; letter-spacing: .3px; }
.author { margin: 0; height: 76px; flex: none; font-size: 24px; line-height: 80px; letter-spacing: -.65px; color: #222; }
.author b { font-weight: 600; margin-right: 1px; }
.author a { color: #11907c; }
.applet { width: 1429px; height: 508px; border-top: 1px solid #ccc; border-left: 1px solid #ccc; display: flex; font-family: "Liberation Sans", Arial, sans-serif; overflow: hidden; flex: none; }
.sheet { width: 516px; overflow: hidden; flex: none; font-size: 24px; color: #000; }
.row { display: flex; height: 36px; line-height: 36px; }
.row span { width: 105px; flex: none; text-align: right; padding-right: 5.5px; }
.row.tall { height: 93px; line-height: 92px; }
.row.head span { text-align: left; padding-left: 6.5px; }
.row.head .sel { width: 105px; height: 38px; margin-left: 1px; margin-right: -1px; border: 4px solid #00f; line-height: 28px; padding-left: 1.5px; position: relative; }
.sel i { position: absolute; right: -7px; bottom: -8px; width: 12px; height: 12px; background: #00f; border: solid #fff; border-width: 2px 0 0 2px; }
.row .r { color: #f00; }
.row .b { color: #00f; }
.sscroll { width: 32px; flex: none; background: #f0f0f0; padding: 14px 0 0 2px; }
.sscroll svg { width: 14px; height: 8px; margin-left: 7px; }
.sscroll i { display: block; width: 27px; height: 69px; margin-top: 9px; background: #bfbfbf; }
.split { width: 10px; flex: none; background: #f7f7f7; border-left: 2px solid #ddd; border-right: 1px solid #ddd; }
.split.two { width: 12px; }
.graph { width: 717px; height: 507px; background: #fff; }
.panel { width: 141px; overflow: hidden; flex: none; font-size: 24px; color: #333; padding-left: 3px; }
.btn { width: 220px; height: 41px; line-height: 36px; margin-top: 15px; padding-left: 14px; border: 2px solid #333; border-radius: 6px; white-space: nowrap; }
.lbl { margin: 2px 0 0 16px; line-height: 36px; }
.btn.big { height: 52px; line-height: 48px; font-size: 36px; color: #111; margin: 10px 0 0 12px; }
.btn.anim { background: #8cff96; border-color: #62c26c; margin-top: 11px; }
.init { display: flex; height: 46px; line-height: 44px; color: #ff2f2f; }
.r0 { margin: 41px 0 0 21px; }
.f0 { margin: 6px 0 0 22px; }
.init span { width: 45px; }
.f0 span { width: 43px; }
.init sub { font-size: 22px; line-height: 0; vertical-align: -10px; }
.init b { width: 61px; height: 46px; border: 2px solid #555; border-radius: 6px; font-weight: 400; padding-left: 2px; }
.chk { display: flex; margin: 6px 0 0 54px; height: 41px; line-height: 41px; }
.chk svg { width: 41px; height: 41px; margin-right: 13px; }
.views { margin: 18px 0 0 51px; line-height: 30px; }
.btn.ang { margin: 0 0 0 21px; height: 60px; line-height: 42px; padding-left: 17px; }
.vscroll { width: 25px; background: #f1f1f1; height: 600px; display: flex; flex-direction: column; align-items: center; padding: 10px 0 9px; }
.vscroll svg { width: 11px; height: 6px; }
.vscroll i { width: 21px; height: 89px; margin-top: 46px; background: #c1c1c1; }
.vscroll .dn { margin-top: auto; }

/* downloads shelf */
.shelf { height: 84px; flex: none; border-top: 1px solid #c6c8ca; display: flex; align-items: center; padding-left: 6px; background: #fff; color: #444; font-size: 20px; }
.dl { height: 83px; display: flex; align-items: center; position: relative; padding: 1px 0 0 25px; }
.dl::after { content: ""; position: absolute; right: -1px; top: 9px; width: 1px; height: 66px; background: #bbb; }
.dl.one { width: 350px; background: #ebebeb; }
.dl.two { width: 350px; background: #ebebeb; padding-left: 26px; }
.dl.three { width: 349px; padding-left: 26px; }
.pdf { width: 20px; height: 23px; }
.chev { width: 18px; height: 18px; }
.dl span { letter-spacing: -.5px; width: 239px; margin-left: 22px; }
.dl.two span { width: 235px; margin-left: 25px; letter-spacing: -.58px; }
.dl.three span { width: 231px; margin-left: 28px; }
.showall { width: 117px; height: 48px; margin-left: 694px; margin-top: -2px; border: 1.5px solid #dadce0; border-radius: 6px; color: #1a66e8; font-size: 18px; line-height: 45px; text-align: center; letter-spacing: -.2px; font-weight: 500; }
.sx { width: 14px; height: 14px; margin-left: 20px; margin-top: -2px; }

/* taskbar */
.task { height: 60px; flex: none; background: linear-gradient(90deg, #3b3027, #3f362c 60%, #3a3028 90%, #40372d); display: flex; color: #fff; }
.tb { width: 75px; flex: none; display: flex; align-items: center; justify-content: center; position: relative; }
.tb.start { width: 72px; }
.tb.tv { padding-right: 1px; }
.tb.run::after { content: ""; position: absolute; left: 7px; bottom: 0; width: 61px; height: 3px; background: #76b9ed; }
.tb.chrome { width: 73px; margin-left: 2px; background: linear-gradient(90deg, #655c54 66px, #38332d 66px, #38332d 68px, #544b43 68px); padding-right: 2px; }
.tb.chrome::after { left: 0; width: 73px; }
.tb.mailapp i { position: absolute; left: 44px; top: 29px; width: 25px; height: 25px; border: 1.5px solid #999; border-radius: 50%; background: #2e2e2e; font-size: 16px; line-height: 22px; font-weight: 600; text-align: center; letter-spacing: -.5px; }
.tray { margin-left: auto; display: flex; align-items: center; height: 60px; }
.tc { margin-left: 19px; }
.wf { margin-left: 31px; }
.bt { margin-left: 25px; }
.wr { margin-left: 23px; }
.pn { margin-left: 31px; }
.clock { width: 100px; margin-left: 20px; display: flex; flex-direction: column; align-items: center; font-size: 18px; line-height: 28px; letter-spacing: -.55px; }
.note { position: relative; margin-left: 21px; width: 55px; }
.note i { position: absolute; left: 8px; top: 11px; width: 30px; height: 25px; border: 1.5px solid #888; border-radius: 13px; background: #333; font-size: 16px; line-height: 22px; font-weight: 600; text-align: center; }
.peek { width: 7px; height: 60px; border-left: 1.5px solid #777; }
```
